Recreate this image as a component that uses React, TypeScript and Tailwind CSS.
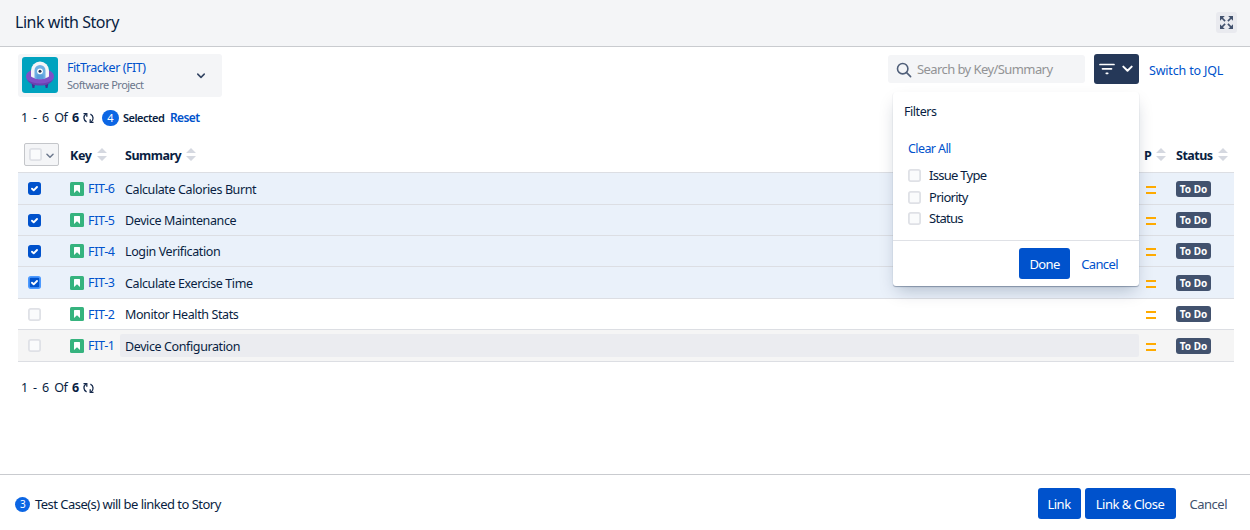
import type { ReactNode } from "react";

type Issue = { key: string; summary: string; checked: boolean; focused?: boolean; height: string; tone: string; hovered?: boolean };

const issues: Issue[] = [
  { key: "FIT-6", summary: "Calculate Calories Burnt", checked: true, height: "h-8", tone: "bg-[#eaf1fa]" },
  { key: "FIT-5", summary: "Device Maintenance", checked: true, height: "h-[31px]", tone: "bg-[#eaf1fa]" },
  { key: "FIT-4", summary: "Login Verification", checked: true, height: "h-[31px]", tone: "bg-[#eaf1fa]" },
  { key: "FIT-3", summary: "Calculate Exercise Time", checked: true, focused: true, height: "h-8", tone: "bg-[#eaf1fa]" },
  { key: "FIT-2", summary: "Monitor Health Stats", checked: false, height: "h-[31px]", tone: "bg-white" },
  { key: "FIT-1", summary: "Device Configuration", checked: false, height: "h-8", tone: "bg-[#f5f5f5]", hovered: true },
];

function Checkbox({ checked = false, focused = false }: { checked?: boolean; focused?: boolean }) {
  return (
    <svg className="size-[13px] shrink-0" viewBox="0 0 13 13">
      <rect
        x="0.9"
        y="0.9"
        width="11.2"
        height="11.2"
        rx="1.8"
        fill={checked ? "#0052cc" : "#fafbfc"}
        stroke={focused ? "#4c9aff" : checked ? "#0052cc" : "#dfe1e6"}
        strokeWidth="1.8"
      />
      {checked && <path d="M4 6.7 5.700 8.300 9 5" fill="none" stroke="#fff" strokeWidth="1.900" strokeLinecap="round" strokeLinejoin="round" />}
    </svg>
  );
}

function SortIcon() {
  return (
    <svg className="mb-px h-[13px] w-[10px] shrink-0" viewBox="0 0 10 13">
      <path d="M0 5 5 0l5 5zM0 8h10l-5 5z" fill="#d5d8e0" />
    </svg>
  );
}

function Chevron({ className }: { className: string }) {
  return (
    <svg className={className} viewBox="0 0 10 7">
      <path d="M1.2 1.3 5 5.1l3.8-3.8" fill="none" stroke="currentColor" strokeWidth="1.8" strokeLinecap="round" strokeLinejoin="round" />
    </svg>
  );
}

function StoryIcon() {
  return (
    <svg className="size-[14px] shrink-0" viewBox="0 0 14 14">
      <rect width="14" height="14" rx="1.5" fill="#36b37e" />
      <path d="M4 3.6q0-.6.6-.6h4.8q.6 0 .6.6V11L7 8.3 4 11z" fill="#fff" />
    </svg>
  );
}

function RefreshIcon() {
  return (
    <svg className="h-[12px] w-[11px] shrink-0" viewBox="0 0 11 12">
      <g fill="none" stroke="#172b4d" strokeWidth="1.3">
        <path d="M3.600 9.800C.2 8.200.2 4.200 2.800 2" />
        <path d="M.5 1.600h3.300v3.200" />
        <path d="M7.400 2.200c3.400 1.600 3.400 5.600.8 7.800" />
        <path d="M10.500 10.400H7.200V7.200" />
      </g>
    </svg>
  );
}

function ProjectAvatar() {
  return (
    <svg className="size-9 shrink-0" viewBox="0 0 36 36">
      <rect width="36" height="36" rx="3" fill="#00a3bf" />
      <path d="M9.500 26h3.800l-1 5h-1.800zM22.700 26h3.800l-1 5h-1.800z" fill="#403294" />
      <ellipse cx="18" cy="19.500" rx="14" ry="8" fill="#7f50c7" />
      <path d="M5 22.500c2 4 7 6 13 6s11-2 13-6c-3 2.500-8 4-13 4s-10-1.500-13-4z" fill="#6a42b0" />
      <path d="M9 19.500v-6a9 9 0 0 1 18 0v6c-4 3-14 3-18 0z" fill="#f4f5f7" />
      <path d="M12.500 21.500V13.500a5.500 5.500 0 0 1 11 0v8c-3 .9-8 .9-11 0z" fill="#6fb0e3" />
      <path d="M14.500 17.500h7V22h-7z" fill="#5a9edb" />
      <circle cx="18" cy="14.300" r="2.900" fill="#fff" />
      <circle cx="18" cy="14.300" r="1.500" fill="#253858" />
    </svg>
  );
}

function PageCount() {
  return (
    <div className="flex items-center text-[12.500px] leading-4">
      <span className="-ml-px w-[51px] whitespace-nowrap tracking-[-0.5px] [word-spacing:2.700px]">1 - 6 Of</span>
      <b className="w-[11px] font-bold">6</b>
      <RefreshIcon />
    </div>
  );
}

function Header({ children, className }: { children: ReactNode; className: string }) {
  return (
    <div className={`flex items-center gap-[5px] whitespace-nowrap text-[12.500px] font-bold ${className}`}>
      <span className="mt-[3px]">{children}</span>
      <SortIcon />
    </div>
  );
}

function FilterMenu() {
  return (
    <div className="absolute top-[92px] left-[893px] z-10 h-[194px] w-[246px] rounded-[3px] bg-white shadow-[0_8px_16px_-4px_rgba(9,30,66,0.25),0_1px_1px_rgba(9,30,66,0.35)]">
      <div className="flex h-[148px] flex-col pl-[11px]">
        <div className="mt-[11px] text-[12.500px] leading-[18px] tracking-[-0.45px]">Filters</div>
        <a className="mt-[19px] ml-1 text-[12.500px] leading-[18px] tracking-[-0.6px] text-[#0052cc]">Clear All</a>
        <div className="mt-[7px] ml-1 flex flex-col">
          {["Issue Type", "Priority", "Status"].map((name) => (
            <label key={name} className="flex h-[21.600px] items-center gap-[8px] text-[13px] tracking-[-0.72px]">
              <Checkbox />
              {name}
            </label>
          ))}
        </div>
      </div>
      <div className="flex h-[46px] items-center justify-end gap-[11px] border-t border-[#dfe1e6] pr-[21px] text-[13px] tracking-[-0.6px]">
        <button className="h-[31px] w-[51px] rounded-[3px] bg-[#0052cc] pt-[2px] text-white">Done</button>
        <button className="pt-[2px] text-[#0052cc]">Cancel</button>
      </div>
    </div>
  );
}

export default function App() {
  return (
    <div className="relative flex h-[530px] w-[1250px] flex-col overflow-hidden bg-white font-['Noto_Sans','Open_Sans',sans-serif] text-[#091e42]">
      <header className="flex h-[47px] shrink-0 items-center justify-between border-b border-[#c9cbcf] bg-[#f4f5f7] pr-[13px] pl-[15px]">
        <h1 className="pb-[3px] text-[16px] tracking-[-0.45px]">Link with Story</h1>
        <button className="mb-px flex size-[21px] items-center justify-center rounded-[3px] bg-[#e9eaef]">
          <svg className="size-[13px]" viewBox="0 0 13 13">
            <path d="M0 0h4.800L0 4.800zM13 0v4.800L8.200 0zM0 13V8.200L4.800 13zM13 13H8.200L13 8.200z" fill="#42526e" />
            <path d="m1.500 1.500 3.600 3.600M11.500 1.500 7.900 5.100M1.500 11.500l3.600-3.600M11.500 11.500 7.900 7.900" stroke="#42526e" strokeWidth="1.700" />
          </svg>
        </button>
      </header>

      <main className="flex h-[427px] shrink-0 flex-col pr-4 pl-[18px]">
        <div className="flex h-[62px] items-start justify-between pt-[7px]">
          <div className="flex h-[43px] w-[204px] items-center rounded-[3px] bg-[#f4f5f7] pr-4 pb-px pl-1">
            <ProjectAvatar />
            <div className="mt-[2px] ml-[9px] grow whitespace-nowrap">
              <div className="text-[12.500px] leading-[18px] tracking-[-0.45px] text-[#0052cc]">FitTracker (FIT)</div>
              <div className="text-[11px] leading-[16px] tracking-[-0.5px] text-[#6b778c]">Software Project</div>
            </div>
            <Chevron className="mt-[2px] h-[6px] w-[10px] text-[#344563]" />
          </div>
          <div className="flex items-start pr-[11px]">
            <div className="mt-px flex h-7 w-[197px] items-center gap-[5px] rounded-[3px] bg-[#f4f5f7] pl-2">
              <svg className="mt-px size-4" viewBox="0 0 16 16" fill="none" stroke="#505f79" strokeWidth="1.600" strokeLinecap="round">
                <circle cx="6.700" cy="6.700" r="5.200" />
                <path d="m10.600 10.600 4 4" />
              </svg>
              <span className="mt-[2px] whitespace-nowrap text-[13px] tracking-[-0.58px] text-[#929395]">Search by Key/Summary</span>
            </div>
            <button className="ml-[9px] flex h-[30px] w-[45px] items-center justify-between rounded-[3px] bg-[#253858] pr-[6px] pl-[5px] text-white">
              <svg className="h-[12px] w-4" viewBox="0 0 16 12" fill="none" stroke="currentColor" strokeWidth="1.700" strokeLinecap="round">
                <path d="M1 1.500h14M3.500 5.800h9M7.300 10.300h1.400" />
              </svg>
              <Chevron className="h-[8px] w-[11px]" />
            </button>
            <a className="mt-[8px] ml-[10px] w-[74px] whitespace-nowrap text-[12.500px] leading-[18px] tracking-[-0.18px] text-[#0052cc]">Switch to JQL</a>
          </div>
        </div>

        <div className="flex h-[18px] items-center pl-1">
          <PageCount />
          <span className="ml-[8px] flex h-[16px] w-[17px] items-center justify-center rounded-full bg-[#0c66e4] text-[11px] text-white">4</span>
          <span className="ml-[4px] w-[47px] whitespace-nowrap text-[11px] font-semibold tracking-[-0.5px]">Selected</span>
          <a className="text-[12px] font-semibold tracking-[-0.600px] text-[#0052cc]">Reset</a>
        </div>

        <section className="mt-[10px] flex flex-col">
          <div className="flex h-[36px] items-center border-b border-[#dcdee3]">
            <div className="w-[52px] pl-[6px]">
              <button className="flex h-[23px] w-[35px] items-center justify-between rounded-[2px] border border-[#c4c6ca] bg-[#f4f5f7] pr-1 pl-[4px] text-[#6b778c]">
                <Checkbox />
                <Chevron className="mt-[2px] h-[6px] w-[8px]" />
              </button>
            </div>
            <Header className="w-[55px] tracking-[-0.35px]">Key</Header>
            <Header className="grow tracking-[-0.5px]">Summary</Header>
            <Header className="w-[32px] tracking-[-0.42px]">P</Header>
            <Header className="w-[58px] tracking-[-0.5px]">Status</Header>
          </div>
          {issues.map((issue) => (
            <div key={issue.key} className={`flex items-center border-b border-[#dcdee3] ${issue.height} ${issue.tone}`}>
              <div className="w-[52px] pl-[10px]">
                <Checkbox checked={issue.checked} focused={issue.focused} />
              </div>
              <div className="flex w-[50px] items-center gap-1 text-[12.500px] tracking-[-0.35px] text-[#0052cc]">
                <StoryIcon />
                <span className="mt-[2px] whitespace-nowrap">{issue.key}</span>
              </div>
              <div className={`flex h-[23px] w-[1019px] items-center rounded-[2px] pl-[5px] text-[12.500px] tracking-[-0.39px] ${issue.hovered ? "bg-[#ebecf0]" : ""}`}>
                <span className="mt-[3px]">{issue.summary}</span>
              </div>
              <svg className="mt-[2px] ml-[7px] h-[8px] w-[10px]" viewBox="0 0 10 8">
                <path d="M0 1h10M0 7h10" stroke="#ffab00" strokeWidth="1.800" />
              </svg>
              <span className="ml-5 flex h-4 w-[35px] items-center justify-center rounded-[3px] bg-[#42526e] pt-px text-[10px] font-bold text-white">To Do</span>
            </div>
          ))}
        </section>
        <div className="mt-[18px] pl-1">
          <PageCount />
        </div>
      </main>

      <footer className="flex h-14 items-center border-t border-[#c9cbcf] pr-[23px] pl-[15px] text-[13px] tracking-[-0.5px]">
        <span className="mt-[4px] flex size-[15px] items-center justify-center rounded-full bg-[#0c66e4] text-[10px] text-white">3</span>
        <span className="mt-[5px] ml-[5px] grow tracking-[-0.530px]">Test Case(s) will be linked to Story</span>
        <button className="mt-[2px] h-[31px] w-[43px] rounded-[3px] bg-[#0052cc] pt-[2px] text-white">Link</button>
        <button className="mt-[2px] ml-1 h-[31px] w-[91px] rounded-[3px] bg-[#0052cc] pt-[2px] text-white">Link &amp; Close</button>
        <button className="mt-[4px] ml-[14px] text-[#42526e]">Cancel</button>
      </footer>

      <FilterMenu />
    </div>
  );
}
